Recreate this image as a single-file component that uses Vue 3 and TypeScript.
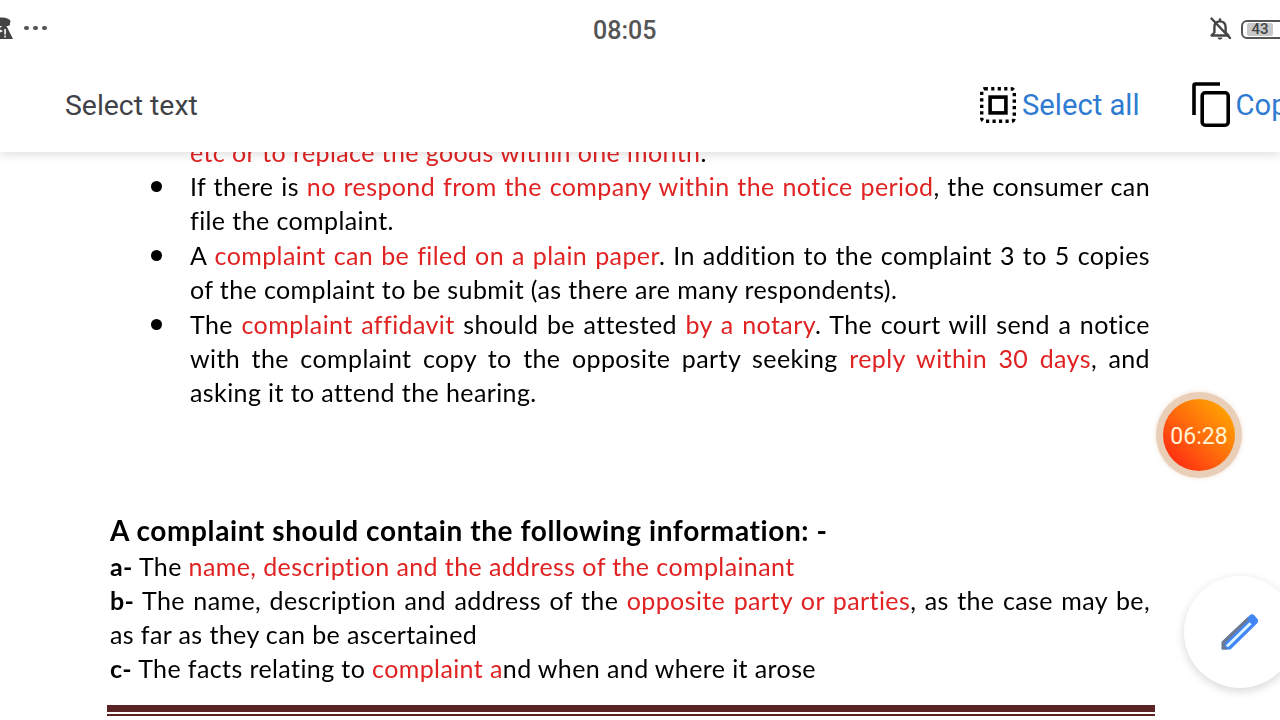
<script setup lang="ts">
type Seg = { t: string; red?: boolean; bold?: boolean }
type Line = { segs: Seg[]; just?: boolean }

const s = (t: string): Seg => ({ t })
const r = (t: string): Seg => ({ t, red: true })
const b = (t: string): Seg => ({ t, bold: true })

const bullets: { lines: Line[]; hidden?: boolean }[] = [
  { hidden: true, lines: [{ segs: [r('etc or to replace the goods within one month'), s('.')] }] },
  {
    lines: [
      { just: true, segs: [s('If there is '), r('no respond from the company within the notice period'), s(', the consumer can')] },
      { segs: [s('file the complaint.')] }
    ]
  },
  {
    lines: [
      { just: true, segs: [s('A '), r('complaint can be filed on a plain paper'), s('. In addition to the complaint 3 to 5 copies')] },
      { segs: [s('of the complaint to be submit (as there are many respondents).')] }
    ]
  },
  {
    lines: [
      { just: true, segs: [s('The '), r('complaint affidavit'), s(' should be attested '), r('by a notary'), s('. The court will send a notice')] },
      { just: true, segs: [s('with the complaint copy to the opposite party seeking '), r('reply within 30 days'), s(', and')] },
      { segs: [s('asking it to attend the hearing.')] }
    ]
  }
]

const info: Line[] = [
  { segs: [b('a-'), s(' The '), r('name, description and the address of the complainant')] },
  { just: true, segs: [b('b-'), s(' The name, description and address of the '), r('opposite party or parties'), s(', as the case may be,')] },
  { segs: [s('as far as they can be ascertained')] },
  { segs: [b('c-'), s(' The facts relating to '), r('complaint a'), s('nd when and where it arose')] }
]
</script>

<template>
  <div class="screen">
    <main class="doc">
      <ul class="bullets">
        <li v-for="(item, i) in bullets" :key="i" class="bullet-item">
          <span class="dot" :class="{ ghost: item.hidden }"></span>
          <div class="lines">
            <div v-for="(line, j) in item.lines" :key="j" class="line" :class="{ just: line.just }">
              <span v-for="(seg, k) in line.segs" :key="k" :class="{ red: seg.red, bold: seg.bold }">{{ seg.t }}</span>
            </div>
          </div>
        </li>
      </ul>

      <section class="info">
        <h2 class="heading">A complaint should contain the following information: -</h2>
        <div v-for="(line, j) in info" :key="j" class="line" :class="{ just: line.just }">
          <span v-for="(seg, k) in line.segs" :key="k" :class="{ red: seg.red, bold: seg.bold }">{{ seg.t }}</span>
        </div>
      </section>

      <div class="rule"></div>
    </main>

    <header class="top">
      <div class="status">
        <div class="status-left">
          <svg class="net" width="13" height="24" viewBox="0 0 13 24">
            <ellipse cx="2" cy="4.5" rx="8.5" ry="4" fill="#444" />
            <path d="M-3 6 H10 V8 L8 9 H-3 Z" fill="#444" />
            <path d="M5 6 L13 22 H-4 L-1 16 L3 14 L-1 12 Z" fill="#444" />
            <rect x="4.3" y="12" width="1.6" height="5.5" fill="#fff" />
            <rect x="4.3" y="18.6" width="1.6" height="1.8" fill="#fff" />
          </svg>
          <span class="dots"><i></i><i></i><i></i></span>
        </div>
        <div class="clock">08:05</div>
        <div class="status-right">
          <svg width="24" height="24" viewBox="0 0 24 24" fill="none" stroke="#444" stroke-width="2.4">
            <path d="M3.5 18.5 H20.5 L17.6 15.5 V10 C17.6 6.6 15.4 4.4 12 4.4 C8.6 4.4 6.4 6.6 6.4 10 V15.5 Z" stroke-linejoin="round" />
            <path d="M9.5 20.5 C10 23.2 14 23.2 14.5 20.5 Z" fill="#444" stroke="none" />
            <path d="M3.5 1.5 L22 21" stroke-linecap="round" />
            <path d="M12 1.4 V4" />
          </svg>
          <div class="battery"><span class="battery-fill">43</span></div>
        </div>
      </div>
      <div class="actions">
        <div class="title">Select text</div>
        <div class="action-group">
          <div class="action">
            <svg width="36" height="36" viewBox="0 0 36 36" fill="none" stroke="#000">
              <rect x="1.7" y="1.7" width="32.6" height="32.6" rx="3" stroke-width="3.4" stroke-dasharray="3.2 3.3" />
              <rect x="10.1" y="10.1" width="15.8" height="15.8" stroke-width="3.6" />
            </svg>
            <span class="action-label">Select all</span>
          </div>
          <div class="action">
            <svg width="40" height="45" viewBox="0 0 40 45" fill="none" stroke="#000" stroke-width="3.6">
              <path d="M28 2 H3.5 Q2 2 2 3.5 V33" />
              <rect x="10.2" y="10.8" width="26" height="32.4" rx="3" />
            </svg>
            <span class="action-label">Copy</span>
          </div>
        </div>
      </div>
    </header>

    <div class="timer"><div class="timer-core">06:28</div></div>

    <div class="fab">
      <svg width="40" height="40" viewBox="0 0 40 40">
        <path d="M0.7 36.5 V28.7 L29 2 Q31 0.6 33 2 L36.5 6 Q38 8 36.5 10 L9.5 36.5 Z" fill="#4285f4" />
        <path d="M0.7 36.5 V28.7 L26 4.8 L28 6.8 L3.8 30 V33.6 L6.6 36.5 Z" fill="#70798c" />
        <path d="M4.8 32.4 L28.6 9.2 L30.6 11.2 L7 34.2 Z" fill="#dff6ff" />
      </svg>
    </div>
  </div>
</template>

<style scoped>
.screen {
  position: relative;
  width: 1280px;
  height: 720px;
  overflow: hidden;
  background: #fff;
  font-family: Roboto, sans-serif;
}

.doc {
  padding: 135px 125px 0 110px;
  font-family: Lato, "Open Sans", sans-serif;
  font-size: 25px;
  letter-spacing: 0.4px;
  font-variant-ligatures: none;
  color: #000;
  filter: blur(0.3px);
}

.bullets {
  list-style: none;
  margin: 0;
  padding: 0;
  display: flex;
  flex-direction: column;
}

.bullet-item {
  display: flex;
  align-items: flex-start;
  padding-left: 41px;
}

.bullet-item + .bullet-item + .bullet-item {
  margin-top: 1px;
}

.bullet-item:last-child {
  margin-top: 3px;
}

.dot {
  flex: none;
  width: 11px;
  height: 11px;
  margin: 12px 28px 0 0;
  border-radius: 50%;
  background: #000;
}

.dot.ghost {
  visibility: hidden;
}

.lines {
  width: 960px;
}

.line {
  height: 34px;
  line-height: 34px;
  white-space: nowrap;
}

.line.just {
  white-space: normal;
  text-align: justify;
  text-align-last: justify;
}

.red {
  color: #e02222;
}

.bold {
  font-weight: 700;
}

.info {
  margin-top: 104px;
  width: 1040px;
}

.heading {
  margin: 0 0 2px;
  height: 34px;
  line-height: 35px;
  font-size: 28px;
  letter-spacing: 0.6px;
  font-weight: 700;
  white-space: nowrap;
}

.rule {
  width: 1048px;
  height: 11px;
  margin: 20px 0 0 -3px;
  background: linear-gradient(#5a2323 0 7px, #fff 7px 9px, #5a2323 9px 11px);
}

.top {
  position: absolute;
  left: 0;
  top: 0;
  width: 100%;
  height: 152px;
  background: #fff;
  box-shadow: 0 2px 10px rgba(0, 0, 0, 0.14);
}

.status {
  display: flex;
  align-items: center;
  justify-content: space-between;
  height: 58px;
  position: relative;
}

.status-left {
  display: flex;
  align-items: center;
  gap: 11px;
}

.dots {
  display: flex;
  gap: 4.5px;
  margin-top: -2px;
}

.dots i {
  display: block;
  width: 4.5px;
  height: 4.5px;
  border-radius: 50%;
  background: #555;
}

.clock {
  position: absolute;
  left: 593px;
  top: 15px;
  font-size: 25px;
  line-height: 32px;
  font-weight: 500;
  color: #555;
}

.status-right {
  display: flex;
  align-items: center;
  gap: 9px;
  margin-right: -39px;
}

.battery {
  width: 78px;
  height: 19px;
  box-sizing: border-box;
  border: 2px solid #555;
  border-radius: 6px;
  padding: 1px 4px;
}

.battery-fill {
  display: block;
  width: 26px;
  height: 13px;
  border-radius: 2px;
  background: #c8c8c8;
  color: #444;
  font-size: 15px;
  line-height: 13px;
  font-weight: 500;
  text-align: center;
}

.actions {
  display: flex;
  align-items: center;
  height: 94px;
  padding-left: 65px;
}

.title {
  font-size: 28.4px;
  color: #3f4247;
}

.action-group {
  position: absolute;
  left: 980px;
  top: 82px;
  display: flex;
  align-items: center;
  gap: 52px;
}

.action {
  display: flex;
  align-items: center;
  gap: 6px;
}

.action + .action {
  gap: 4px;
}

.action-label {
  font-size: 29.2px;
  line-height: 44px;
  color: #2e7bd1;
  white-space: nowrap;
}

.timer {
  position: absolute;
  left: 1156px;
  top: 392px;
  width: 86px;
  height: 86px;
  box-sizing: border-box;
  padding: 7px;
  border-radius: 50%;
  background: rgba(226, 190, 160, 0.75);
  box-shadow: 0 0 4px rgba(226, 190, 160, 0.5);
}

.timer-core {
  width: 72px;
  height: 72px;
  border-radius: 50%;
  background: linear-gradient(225deg, #ffa800 8%, #ff6c0c 50%, #ff2a12 90%);
  color: #fff3d6;
  font-size: 23px;
  line-height: 75px;
  text-align: center;
}

.fab {
  position: absolute;
  left: 1184px;
  top: 576px;
  width: 112px;
  height: 112px;
  border-radius: 50%;
  background: #fff;
  box-shadow: 0 3px 10px rgba(0, 0, 0, 0.16);
}

.fab svg {
  position: absolute;
  left: 37px;
  top: 37px;
}
</style>
